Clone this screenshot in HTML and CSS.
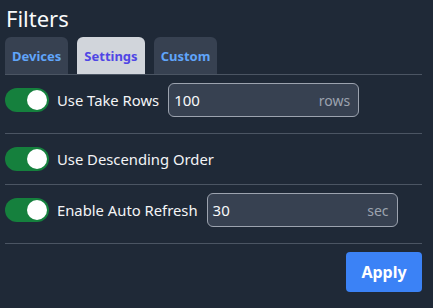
FILE: index.html
```html
<!DOCTYPE html>
<html>
<head>
<meta charset="utf-8">
<link rel="stylesheet" href="styles.css">
</head>
<body>
<div class="panel">
  <h1 class="title">Filters</h1>
  <div class="tabs">
    <div class="tab">Devices</div>
    <div class="tab tab-active">Settings</div>
    <div class="tab">Custom</div>
  </div>
  <div class="row row-input">
    <span class="toggle"><span class="knob"></span></span>
    <span class="label">Use Take Rows</span>
    <div class="field"><span class="value">100</span><span class="unit">rows</span></div>
  </div>
  <div class="row row-plain">
    <span class="toggle"><span class="knob"></span></span>
    <span class="label">Use Descending Order</span>
  </div>
  <div class="row row-input">
    <span class="toggle"><span class="knob"></span></span>
    <span class="label">Enable Auto Refresh</span>
    <div class="field"><span class="value">30</span><span class="unit">sec</span></div>
  </div>
  <div class="actions">
    <button class="apply">Apply</button>
  </div>
</div>
</body>
</html>
```
FILE: styles.css
```css
html, body {
  margin: 0;
  padding: 0;
  background: #1f2937;
  height: 100%;
}
body {
  font-family: "Noto Sans", "Open Sans", sans-serif;
  color: #f3f4f6;
}
.panel {
  padding: 0 11px 0 5px;
}
.title {
  margin: 0;
  height: 37px;
  font-size: 22px;
  font-weight: 400;
  line-height: 37px;
  padding-left: 1px;
  color: #f9fafb;
}
.tabs {
  display: flex;
  gap: 9px;
  border-bottom: 1px solid #4b5563;
}
.tab {
  height: 37px;
  padding: 0 7px;
  display: flex;
  align-items: center;
  background: #374151;
  border-radius: 6px 6px 0 0;
  color: #60a5fa;
  font-size: 13px;
  font-weight: 700;
}
.tab-active {
  background: #d1d5db;
  color: #4f46e5;
}
.row {
  display: flex;
  align-items: center;
  gap: 8px;
  border-bottom: 1px solid #4b5563;
}
.row-input {
  padding: 8px 0 16px;
}
.row-plain {
  padding: 8px 0;
  min-height: 34px;
}
.toggle {
  width: 44px;
  height: 24px;
  border-radius: 12px;
  background: #15803d;
  position: relative;
  flex: none;
}
.knob {
  position: absolute;
  right: 2px;
  top: 2px;
  width: 20px;
  height: 20px;
  border-radius: 50%;
  background: #fff;
}
.label {
  font-size: 14.8px;
}
.field {
  width: 191px;
  height: 34px;
  box-sizing: border-box;
  border: 1px solid #9ca3af;
  border-radius: 6px;
  background: #374151;
  display: flex;
  align-items: center;
  justify-content: space-between;
  padding: 0 8px 0 5px;
  margin-left: 1px;
}
.value {
  font-size: 15px;
  color: #f9fafb;
}
.unit {
  font-size: 14px;
  color: #9ca3af;
}
.actions {
  display: flex;
  justify-content: flex-end;
  padding-top: 8px;
}
.apply {
  width: 76px;
  height: 40px;
  border: none;
  border-radius: 4px;
  background: #3b82f6;
  color: #fff;
  font-family: inherit;
  font-size: 16px;
  font-weight: 700;
}
```
